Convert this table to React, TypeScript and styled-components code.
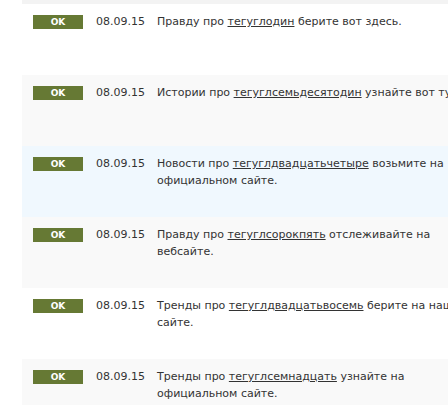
import React from 'react';
import styled, { createGlobalStyle } from 'styled-components';

type Item = {
  before: string;
  tag: string;
  after: string;
};

const items: Item[] = [
  { before: 'Правду про', tag: 'тегуглодин', after: 'берите вот здесь.' },
  { before: 'Истории про', tag: 'тегуглсемьдесятодин', after: 'узнайте вот тут.' },
  { before: 'Новости про', tag: 'тегуглдвадцатьчетыре', after: 'возьмите на официальном сайте.' },
  { before: 'Правду про', tag: 'тегуглсорокпять', after: 'отслеживайте на вебсайте.' },
  { before: 'Тренды про', tag: 'тегуглдвадцатьвосемь', after: 'берите на нашем сайте.' },
  { before: 'Тренды про', tag: 'тегуглсемнадцать', after: 'узнайте на официальном сайте.' },
];

const HIGHLIGHTED = 2;

const GlobalStyle = createGlobalStyle`
  html, body {
    margin: 0;
    padding: 0;
    background: #ffffff;
    overflow: hidden;
  }
`;

const Feed = styled.div`
  margin-left: 22px;
  width: 620px;
  font-family: 'DejaVu Sans', Verdana, sans-serif;
  font-size: 11px;
  color: #333333;
`;

const TopStrip = styled.div`
  height: 4px;
  background: #f3f3f3;
`;

const Row = styled.div<{ $tone: 'white' | 'grey' | 'blue' }>`
  height: 71px;
  box-sizing: border-box;
  padding: 9px 0 0 11px;
  display: flex;
  align-items: flex-start;
  background: ${p =>
    p.$tone === 'blue' ? '#f0f8fe' : p.$tone === 'grey' ? '#f9f9f9' : '#ffffff'};
`;

const Status = styled.span`
  flex: none;
  width: 50px;
  height: 14px;
  margin-top: 2px;
  background: #667934;
  color: #ffffff;
  font-size: 9px;
  font-weight: bold;
  line-height: 14px;
  text-align: center;
`;

const DateCell = styled.span`
  flex: none;
  margin-left: 13px;
  width: 61px;
  line-height: 17px;
`;

const Text = styled.p`
  margin: 0;
  width: 320px;
  line-height: 17px;
`;

const TagLink = styled.a`
  color: #333333;
  text-decoration: underline;
`;

const App = () => {
  return (
    <>
      <GlobalStyle />
      <Feed>
        <TopStrip />
        {items.map((item, i) => (
          <Row
            key={item.tag}
            $tone={i === HIGHLIGHTED ? 'blue' : i % 2 ? 'grey' : 'white'}
          >
            <Status>OK</Status>
            <DateCell>08.09.15</DateCell>
            <Text>
              {item.before} <TagLink href='#'>{item.tag}</TagLink> {item.after}
            </Text>
          </Row>
        ))}
      </Feed>
    </>
  );
};

export default App;
